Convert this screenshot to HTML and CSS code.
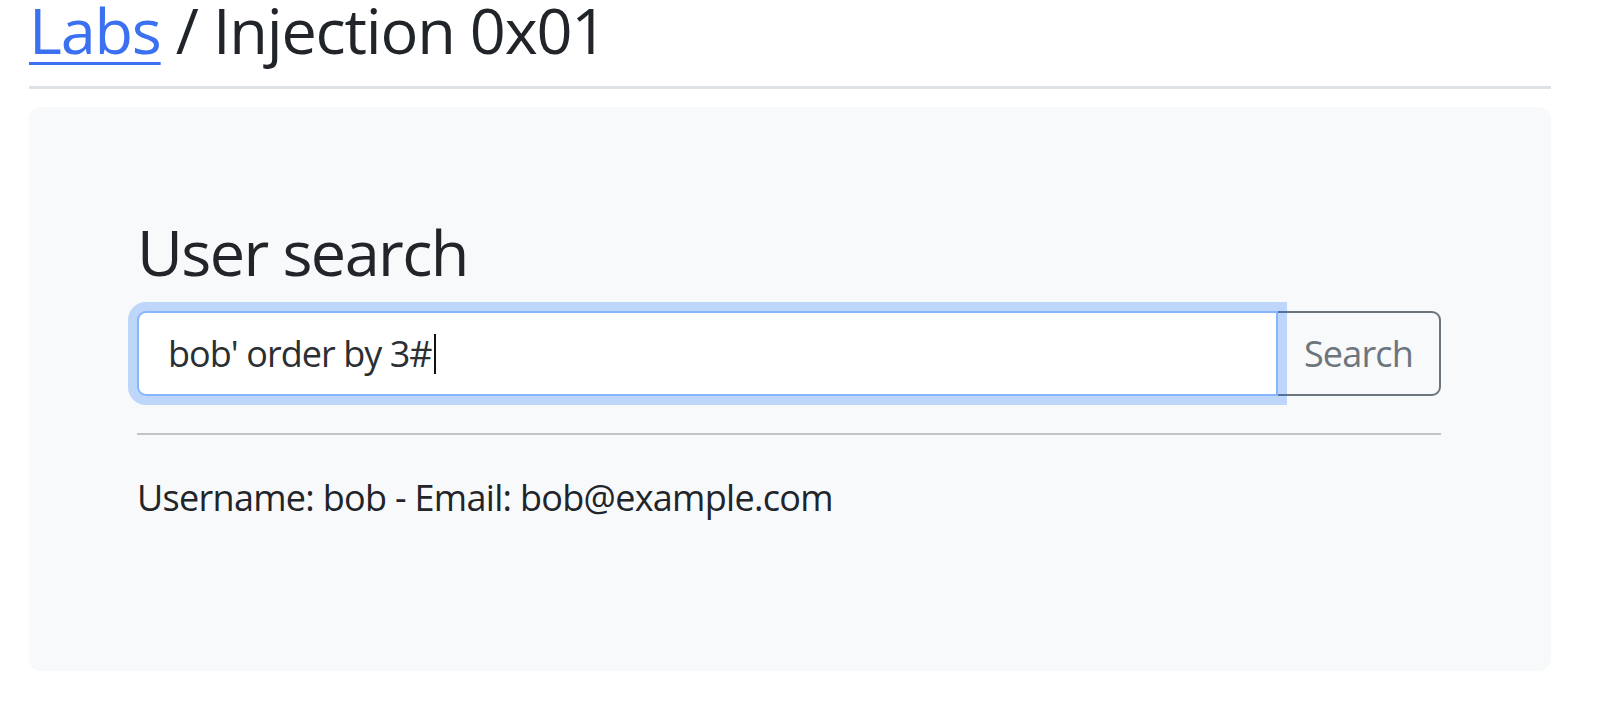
FILE: index.html
```html
<!DOCTYPE html>
<html lang="en">
<head>
<meta charset="utf-8">
<title>Injection 0x01</title>
<link rel="stylesheet" href="styles.css">
</head>
<body>
<div class="container">
  <header class="page-header">
    <h1 class="page-title"><a href="#" class="crumb-link">Labs</a> / Injection 0x01</h1>
  </header>
  <main class="panel">
    <h2 class="panel-title">User search</h2>
    <form class="input-group" onsubmit="return false;">
      <div class="search-field is-focused"><span class="typed">bob' order by 3#</span><span class="caret"></span></div>
      <button type="submit" class="btn-search">Search</button>
    </form>
    <hr class="divider">
    <p class="result">Username: bob - Email: bob@example.com</p>
  </main>
</div>
</body>
</html>
```
FILE: styles.css
```css
* { box-sizing: border-box; }

html, body {
  margin: 0;
  padding: 0;
  background: #ffffff;
}

body {
  font-family: "Open Sans", "Noto Sans", sans-serif;
  font-size: 36px;
  line-height: 54px;
  color: #212529;
}

.container {
  width: 1522px;
  margin-left: 29px;
}

.page-header {
  padding-top: 2px;
  padding-bottom: 28px;
  border-bottom: 3px solid #dee2e6;
  margin-bottom: 18px;
}

.page-title {
  margin: 0;
  font-size: 63px;
  font-weight: 400;
  line-height: 56px;
  letter-spacing: -1.2px;
  color: #212529;
}

.crumb-link {
  color: #3b71f1;
  text-decoration: underline;
  text-decoration-thickness: 3px;
  text-underline-offset: 8px;
}

.panel {
  background: #f8f9fa;
  border-radius: 12px;
  padding: 108px 110px 110px 108px;
}

.panel-title {
  margin: 0 0 22px 0;
  font-size: 63px;
  font-weight: 400;
  line-height: 74px;
  letter-spacing: -1.6px;
}

.input-group {
  display: flex;
  align-items: stretch;
  margin: 0;
}

.search-field {
  flex: 1 1 auto;
  height: 85px;
  display: flex;
  align-items: center;
  padding: 0 27px 0 29px;
  background: #ffffff;
  border: 2px solid #86b7fe;
  border-radius: 9px 0 0 9px;
  color: #2b2f33;
  position: relative;
  z-index: 2;
  letter-spacing: -0.95px;
}

.search-field.is-focused {
  box-shadow: 0 0 0 9px rgba(13, 110, 253, 0.25);
}

.typed {
  white-space: pre;
}

.caret {
  display: inline-block;
  width: 0;
  height: 40px;
  border-left: 2px solid #111;
  margin-left: 2px;
}

.btn-search {
  flex: 0 0 165px;
  height: 85px;
  margin-left: -2px;
  background: transparent;
  border: 2px solid #6c757d;
  border-radius: 0 9px 9px 0;
  color: #6c757d;
  font-family: inherit;
  font-size: 36px;
  line-height: 54px;
  letter-spacing: -0.8px;
  padding: 0;
  cursor: pointer;
}

.divider {
  margin: 37px 0 36px 0;
  border: 0;
  border-top: 2px solid #c2c4c6;
  height: 0;
}

.result {
  margin: 0 0 36px 0;
  letter-spacing: -0.7px;
}
```
